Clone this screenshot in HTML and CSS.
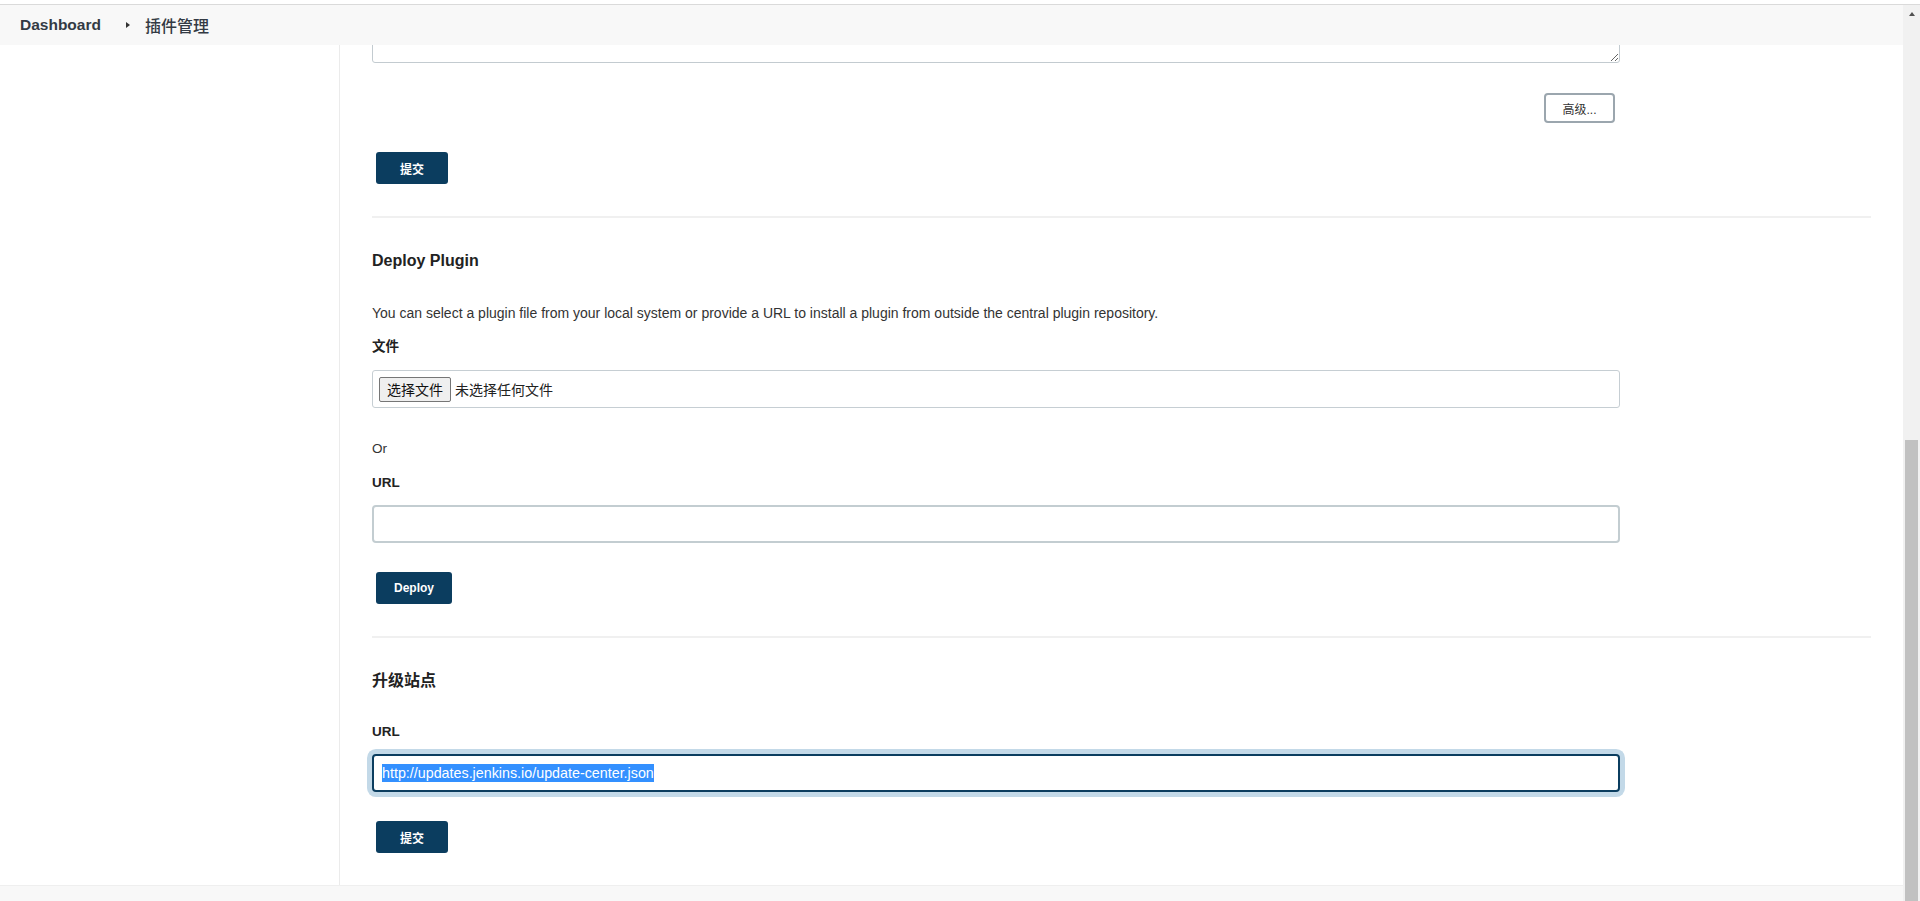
FILE: index.html
```html
<!DOCTYPE html>
<html lang="zh-CN">
<head>
<meta charset="utf-8">
<title>插件管理 [Jenkins]</title>
<link rel="stylesheet" href="styles.css">
</head>
<body>
<div class="topline"></div>
<div class="page">
  <div class="window">
    <div class="breadcrumbs">
      <span class="crumb-home">Dashboard</span>
      <span class="crumb-arrow"></span>
      <span class="crumb-current">插件管理</span>
    </div>
    <div class="body-row">
      <aside class="sidebar"></aside>
      <main class="content">
        <textarea class="proxy-area field-w"></textarea>
        <div class="adv-row field-w">
          <button class="btn-adv">高级...</button>
        </div>
        <button class="btn-primary btn-submit1">提交</button>
        <hr class="sep sep1">

        <h3 class="section-title">Deploy Plugin</h3>
        <p class="desc">You can select a plugin file from your local system or provide a URL to install a plugin from outside the central plugin repository.</p>
        <div class="label label-file">文件</div>
        <div class="file-box field-w">
          <span class="file-btn">选择文件</span>
          <span class="file-name">未选择任何文件</span>
        </div>
        <div class="or">Or</div>
        <div class="label label-url">URL</div>
        <div class="text-input field-w"></div>
        <button class="btn-primary btn-deploy">Deploy</button>
        <hr class="sep sep2">

        <h3 class="section-title">升级站点</h3>
        <div class="label label-url2">URL</div>
        <div class="text-input focused field-w"><span class="selected">http://updates.jenkins.io/update-center.json</span></div>
        <button class="btn-primary btn-submit2">提交</button>
      </main>
    </div>
    <footer class="footer"></footer>
  </div>
  <div class="scrollbar">
    <div class="scroll-up"><span class="scroll-arrow"></span></div>
    <div class="scroll-track">
      <div class="scroll-thumb"></div>
    </div>
  </div>
</div>
</body>
</html>
```
FILE: styles.css
```css
* { box-sizing: border-box; }
html, body {
  margin: 0;
  padding: 0;
  height: 901px;
  overflow: hidden;
  background: #ffffff;
  font-family: "Liberation Sans", "Noto Sans CJK SC", sans-serif;
  color: #333333;
}
.topline {
  height: 5px;
  border-bottom: 1px solid #dadada;
  background: #ffffff;
}
.page {
  display: flex;
  height: 896px;
}
.window {
  flex: 1;
  display: flex;
  flex-direction: column;
  min-width: 0;
}
.breadcrumbs {
  height: 40px;
  background: #f8f8f8;
  display: flex;
  align-items: center;
  padding-left: 20px;
  flex-shrink: 0;
}
.crumb-home {
  font-size: 15.5px;
  font-weight: 700;
  color: #333a44;
}
.crumb-arrow {
  width: 0;
  height: 0;
  border-left: 4px solid #333333;
  border-top: 3.5px solid transparent;
  border-bottom: 3.5px solid transparent;
  margin-left: 25px;
  margin-right: 15px;
}
.crumb-current {
  font-size: 16px;
  font-weight: 500;
  color: #333a44;
  font-family: "Noto Sans CJK SC", sans-serif;
}
.body-row {
  flex: 1;
  display: flex;
  min-height: 0;
}
.sidebar {
  width: 340px;
  border-right: 1px solid #ebebeb;
  flex-shrink: 0;
}
.content {
  flex: 1;
  overflow: hidden;
  padding: 0 32px 0 32px;
  display: flex;
  flex-direction: column;
  align-items: flex-start;
}
.field-w { width: 1248px; }

.proxy-area {
  display: block;
  height: 78px;
  margin: -60px 0 30px 0;
  border: 1px solid #c3cbd0;
  border-radius: 3px;
  resize: vertical;
  background: #ffffff;
  font-family: "Liberation Sans", sans-serif;
  flex-shrink: 0;
}
.adv-row {
  display: flex;
  justify-content: flex-end;
  padding-right: 5px;
  margin-bottom: 29px;
}
.btn-adv {
  width: 71px;
  height: 30px;
  border: 2px solid #9ba6ae;
  border-radius: 4px;
  background: #ffffff;
  color: #333333;
  font-size: 12px;
  font-family: "Liberation Sans", "Noto Sans CJK SC", sans-serif;
  padding: 0;
}
.btn-primary {
  height: 32px;
  margin-left: 4px;
  border: none;
  border-radius: 3px;
  background: #0b3d5f;
  color: #ffffff;
  font-size: 12px;
  font-weight: 700;
  font-family: "Liberation Sans", "Noto Sans CJK SC", sans-serif;
  padding: 0;
  flex-shrink: 0;
}
.btn-submit1 { width: 72px; margin-bottom: 32px; }
.btn-deploy { width: 76px; margin-bottom: 32px; }
.btn-submit2 { width: 72px; }

.sep {
  width: 100%;
  height: 2px;
  margin: 0 0 33px 0;
  border: none;
  background: #f0f0f0;
  flex-shrink: 0;
}
.sep2 { margin-bottom: 33px; }

.section-title {
  margin: 0;
  height: 20px;
  line-height: 20px;
  font-size: 16px;
  font-weight: 700;
  color: #222222;
}
.desc {
  margin: 33px 0 14px 0;
  height: 19px;
  line-height: 19px;
  font-size: 14px;
  color: #333333;
}
.label {
  height: 18px;
  line-height: 18px;
  font-size: 13.5px;
  font-weight: 700;
  color: #222222;
}
.label-file { height: 19px; line-height: 19px; margin-bottom: 14px; }
.label-url { margin-bottom: 13px; }
.label-url2 { margin-top: 32px; margin-bottom: 13px; }

.file-box {
  height: 38px;
  border: 1px solid #c6ced3;
  border-radius: 3px;
  display: flex;
  align-items: center;
  padding-left: 6px;
  margin-bottom: 32px;
  flex-shrink: 0;
}
.file-btn {
  height: 25px;
  width: 72px;
  border: 1px solid #767676;
  border-radius: 2px;
  background: #efefef;
  font-size: 14px;
  line-height: 23px;
  text-align: center;
  color: #111111;
  font-family: "Noto Sans CJK SC", sans-serif;
}
.file-name {
  margin-left: 4px;
  font-size: 14px;
  color: #222222;
  font-family: "Noto Sans CJK SC", sans-serif;
}
.or {
  height: 18px;
  line-height: 18px;
  font-size: 13.5px;
  color: #333333;
  margin-bottom: 16px;
}
.text-input {
  height: 38px;
  border: 2px solid #c3cdd1;
  border-radius: 4px;
  background: #ffffff;
  margin-bottom: 29px;
  display: flex;
  align-items: center;
  padding-left: 8px;
  flex-shrink: 0;
}
.text-input.focused {
  border-color: #0b3d5f;
  box-shadow: 0 0 0 5px #c3d9e8;
}
.selected {
  background: #3390ff;
  color: #ffffff;
  font-size: 14.3px;
  line-height: 18px;
}

.footer {
  height: 16px;
  background: #f8f8f8;
  border-top: 1px solid #efefef;
  flex-shrink: 0;
}
.scrollbar {
  width: 17px;
  background: #f1f1f1;
  display: flex;
  flex-direction: column;
}
.scroll-up {
  height: 17px;
  display: flex;
  justify-content: center;
  padding-top: 7px;
}
.scroll-arrow {
  width: 0;
  height: 0;
  border-bottom: 4px solid #505050;
  border-left: 3.5px solid transparent;
  border-right: 3.5px solid transparent;
}
.scroll-track {
  flex: 1;
  padding: 418px 2px 0 2px;
}
.scroll-thumb {
  height: 100%;
  background: #c1c1c1;
}
```
